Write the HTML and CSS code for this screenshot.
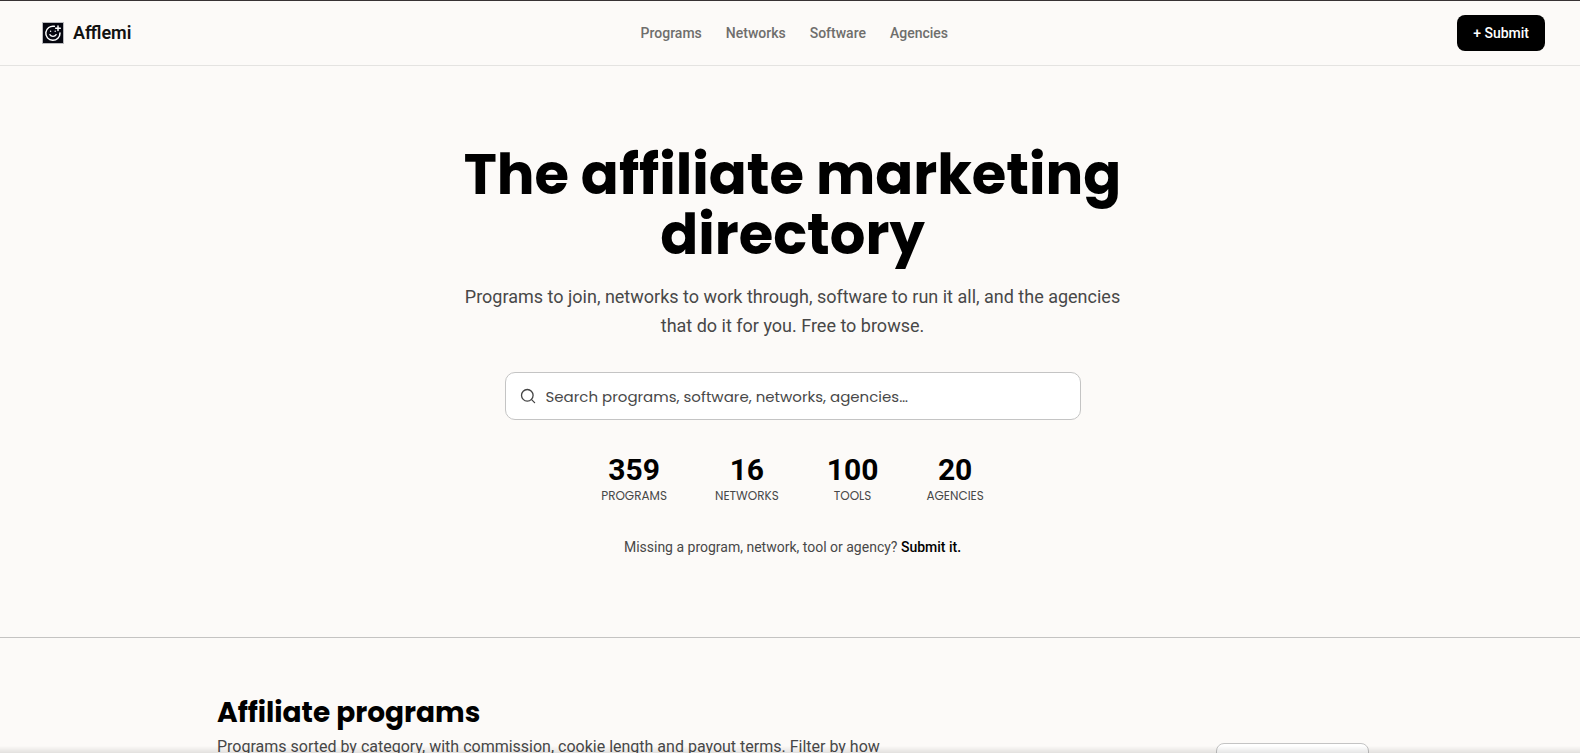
FILE: index.html
```html
<!DOCTYPE html>
<html lang="en">
<head>
    <meta charset="UTF-8">
    <meta name="viewport" content="width=device-width, initial-scale=1.0">
    <title>Afflemi</title>
    <link rel="stylesheet" href="styles.css">
</head>
<body>
    <header class="site-header">
        <a class="logo" href="#">
            <svg class="logo-mark" width="22" height="22" viewBox="0 0 22 22" fill="none" stroke="#fff" stroke-linecap="round" aria-hidden="true">
                <rect x="0.5" y="0.5" width="21" height="21" fill="#05060f" stroke="#b9b9bd"/>
                <path d="M12.3 4.3A7.1 7.1 0 1 0 18 11" stroke-width="1.5"/>
                <path d="M16 3.9v4.6M13.7 6.2h4.6" stroke-width="1.5"/>
                <path d="M7.9 12.6c1.2 2.3 5 2.3 6.2 0" stroke-width="1.3"/>
                <path d="M8.6 9.1v.2M13.2 9.1v.2" stroke-width="1.4"/>
            </svg>
            <span>Afflemi</span>
        </a>
        <nav class="site-nav">
            <a href="#programs">Programs</a>
            <a href="#networks">Networks</a>
            <a href="#software">Software</a>
            <a href="#agencies">Agencies</a>
        </nav>
        <button type="button" class="submit-button">+ Submit</button>
    </header>

    <main>
        <section class="hero">
            <h1>The affiliate marketing directory</h1>
            <p class="intro">Programs to join, networks to work through, software to run it all, and the agencies that do it for you. Free to browse.</p>
            <form class="search">
                <svg width="16" height="16" viewBox="0 0 16 16" fill="none" stroke="#444" stroke-width="1.3" stroke-linecap="round" aria-hidden="true">
                    <circle cx="7.3" cy="7.3" r="5.8"/>
                    <path d="M11.6 11.6l3 3"/>
                </svg>
                <input type="search" aria-label="Search the directory" placeholder="Search programs, software, networks, agencies…">
            </form>
            <dl class="stats">
                <div><dt>Programs</dt><dd>359</dd></div>
                <div><dt>Networks</dt><dd>16</dd></div>
                <div><dt>Tools</dt><dd>100</dd></div>
                <div><dt>Agencies</dt><dd>20</dd></div>
            </dl>
            <p class="missing">Missing a program, network, tool or agency? <a href="#submit">Submit it.</a></p>
        </section>

        <section class="programs" id="programs">
            <div class="programs-text">
                <h2>Affiliate programs</h2>
                <p>Programs sorted by category, with commission, cookie length and payout terms. Filter by how they pay.</p>
            </div>
            <select class="filter" aria-label="Filter programs">
                <option>All programs</option>
            </select>
        </section>
    </main>

    <div class="bottom-fade"></div>
</body>
</html>
```

FILE: styles.css
```css
* {
    box-sizing: border-box;
}

body {
    margin: 0;
    border-top: 1px solid #383234;
    background-color: #fcfaf8;
    color: #484848;
    font-family: Roboto, sans-serif;
}

h1, h2, p, dl, dd {
    margin: 0;
}

a {
    color: inherit;
    text-decoration: none;
}

/* Header */
.site-header {
    display: flex;
    justify-content: space-between;
    align-items: center;
    height: 65px;
    padding: 0 35px 0 42px;
    border-bottom: 1px solid #e4e3e1;
}

.logo {
    display: flex;
    align-items: center;
    gap: 9px;
    color: #111;
    font-size: 18px;
    font-weight: 600;
    line-height: 20px;
}

.site-nav {
    display: flex;
    gap: 24px;
    color: #6f6e6c;
    font-size: 14px;
    font-weight: 500;
}

.submit-button {
    height: 36px;
    padding: 0 16px;
    border: none;
    border-radius: 8px;
    background-color: #000;
    color: #fff;
    font-family: inherit;
    font-size: 14px;
    font-weight: 500;
    cursor: pointer;
}

/* Hero */
.hero {
    display: flex;
    flex-direction: column;
    align-items: center;
    padding: 79px 24px 80px 29px;
    border-bottom: 1px solid #c4c3c2;
    text-align: center;
}

h1 {
    max-width: 768px;
    color: #000;
    font-family: Poppins, Inter, sans-serif;
    font-size: 56px;
    font-weight: 700;
    line-height: 60px;
}

.intro {
    max-width: 672px;
    margin-top: 17px;
    font-size: 18px;
    line-height: 29px;
}

.search {
    display: flex;
    align-items: center;
    gap: 10px;
    width: 100%;
    max-width: 576px;
    height: 48px;
    margin-top: 32px;
    padding: 0 14px;
    border: 1px solid #c4c4c4;
    border-radius: 10px;
    background-color: #fff;
}

.search input {
    flex: 1;
    padding: 0;
    border: none;
    outline: none;
    background: none;
    color: #484848;
    font-family: Poppins, Inter, sans-serif;
    font-size: 15px;
}

.search input::placeholder {
    color: #484848;
}

.stats {
    display: flex;
    gap: 48px;
    margin-top: 32px;
}

.stats div {
    display: flex;
    flex-direction: column-reverse;
}

.stats dd {
    color: #000;
    font-size: 30px;
    font-weight: 700;
    line-height: 36px;
}

.stats dt {
    font-family: Poppins, Inter, sans-serif;
    font-size: 12px;
    line-height: 16px;
    text-transform: uppercase;
}

.missing {
    margin-top: 33px;
    font-size: 14px;
    line-height: 20px;
}

.missing a {
    color: #000;
    font-weight: 500;
}

/* Programs */
.programs {
    display: flex;
    justify-content: space-between;
    align-items: flex-end;
    max-width: 1206px;
    margin: 0 auto;
    padding: 57px 24px 56px 30px;
}

.programs-text {
    max-width: 672px;
}

h2 {
    color: #000;
    font-family: Poppins, Inter, sans-serif;
    font-size: 28px;
    font-weight: 700;
    line-height: 36px;
}

.programs p {
    margin-top: 4px;
    font-size: 16px;
    line-height: 24px;
}

.filter {
    width: 153px;
    height: 40px;
    padding: 0 12px;
    border: 1px solid #c4c4c4;
    border-radius: 8px;
    background-color: #fff;
    color: #484848;
    font-family: inherit;
    font-size: 14px;
}

/* Soft shade along the window's bottom edge */
.bottom-fade {
    position: fixed;
    right: 0;
    bottom: 0;
    left: 0;
    height: 7px;
    background: linear-gradient(rgba(0, 0, 0, 0), rgba(0, 0, 0, 0.1));
    pointer-events: none;
}
```
